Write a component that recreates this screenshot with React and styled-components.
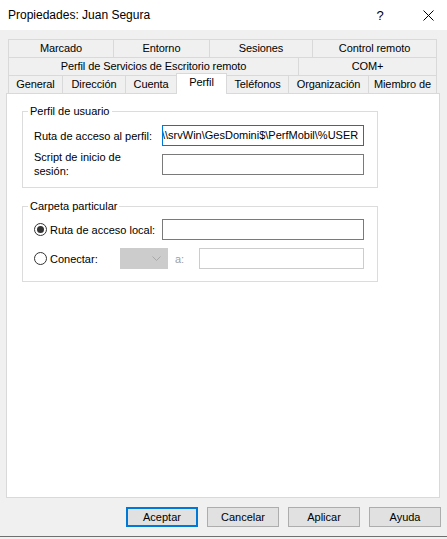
import React from 'react'
import styled, { createGlobalStyle } from 'styled-components'

const GlobalStyle = createGlobalStyle`
  body {
    margin: 0;
    background: #f0f0f0;
    font-family: "Liberation Sans", Arial, sans-serif;
    font-size: 11px;
    color: #000;
  }
`

const Window = styled.div`
  width: 447px;
  height: 539px;
  display: flex;
  flex-direction: column;
  background: #f0f0f0;
  overflow: hidden;
`

const TitleBar = styled.div`
  height: 30px;
  background: #fff;
  display: flex;
  align-items: center;
  padding-left: 8px;
  font-size: 12px;
  flex-shrink: 0;
`

const Title = styled.div`
  flex: 1;
`

const HelpGlyph = styled.span`
  width: 46px;
  text-align: center;
  font-size: 13px;
  margin-right: 6px;
`

const CloseBox = styled.span`
  width: 38px;
  display: flex;
  justify-content: center;
  align-items: center;
`

const TabStrip = styled.div`
  margin: 9px 10px 0 8px;
  display: flex;
  flex-direction: column;
`

const TabRow = styled.div`
  display: flex;
  height: 18px;
`

const Tab = styled.div`
  flex: 0 0 ${p => p.$w}px;
  box-sizing: border-box;
  border-top: 1px solid #d9d9d9;
  border-left: 1px solid #d9d9d9;
  text-align: center;
  line-height: 17px;
  white-space: nowrap;
  letter-spacing: -0.1px;
  &:last-child {
    border-right: 1px solid #d9d9d9;
  }
`

const ActiveTab = styled(Tab)`
  align-self: flex-start;
  height: 21px;
  margin-top: -2px;
  background: #fff;
  border-right: 1px solid #d9d9d9;
  line-height: 16px;
  position: relative;
  z-index: 1;
  & + div {
    border-left: none;
  }
`

const Panel = styled.div`
  margin: 0 7px 0 6px;
  height: 405px;
  box-sizing: border-box;
  background: #fff;
  border: 1px solid #d9d9d9;
  padding: 10px 0 0 15px;
  flex-shrink: 0;
`

const Group = styled.fieldset`
  margin: ${p => p.$top || 0}px 0 0 0;
  width: 356px;
  box-sizing: border-box;
  border: 1px solid #dcdcdc;
  padding: ${p => p.$pad};
`

const Legend = styled.legend`
  padding: 0 2px;
  margin-left: -6px;
  line-height: 14px;
`

const FieldGrid = styled.div`
  display: grid;
  grid-template-columns: 128px 202px;
  row-gap: 4px;
  align-items: center;
`

const Label = styled.div`
  line-height: 14px;
`

const Field = styled.div`
  box-sizing: border-box;
  width: ${p => p.$w || 202}px;
  height: 21px;
  background: #fff;
  border: 1px solid ${p => (p.$focus ? '#0078d7' : p.$off ? '#cccccc' : '#7a7a7a')};
  overflow: hidden;
  white-space: nowrap;
  line-height: 19px;
  text-indent: -1px;
  font-size: 11px;
`

const RadioRow = styled.div`
  display: flex;
  align-items: center;
  height: 21px;
  margin-top: ${p => p.$gap || 0}px;
`

const RadioLabel = styled.label`
  display: flex;
  align-items: center;
  width: ${p => p.$w}px;
  flex-shrink: 0;
`

const Radio = styled.span`
  width: 13px;
  height: 13px;
  box-sizing: border-box;
  border: 1px solid #333;
  border-radius: 50%;
  background: #fff;
  margin-right: 3px;
  display: flex;
  align-items: center;
  justify-content: center;
  &::after {
    content: '';
    width: 7px;
    height: 7px;
    border-radius: 50%;
    background: ${p => (p.$checked ? '#333' : 'transparent')};
  }
`

const Combo = styled.div`
  width: 48px;
  height: 21px;
  box-sizing: border-box;
  background: #cccccc;
  border: 1px solid #cccccc;
  display: flex;
  align-items: center;
  justify-content: flex-end;
  padding-right: 6px;
`

const ToLabel = styled.span`
  width: 24px;
  margin-left: 7px;
  color: #a0a0a0;
`

const ButtonBar = styled.div`
  display: flex;
  justify-content: flex-end;
  gap: 9px;
  padding: 9px 6px 0 0;
`

const Button = styled.button`
  width: 72px;
  height: 20px;
  box-sizing: border-box;
  background: #e1e1e1;
  border: ${p => (p.$primary ? '2px solid #0078d7' : '1px solid #adadad')};
  font-family: inherit;
  font-size: 11px;
  color: #000;
  padding: 0;
`

const BottomLine = styled.div`
  margin-top: auto;
  margin-bottom: 2px;
  height: 1px;
  background: #6f6f6f;
`

const topTabs = [
  [
    ['Marcado', 105],
    ['Entorno', 96],
    ['Sesiones', 103],
    ['Control remoto', 125],
  ],
  [
    ['Perfil de Servicios de Escritorio remoto', 290],
    ['COM+', 139],
  ],
]

const frontTabs = [
  ['General', 54],
  ['Dirección', 63],
  ['Cuenta', 51],
  ['Perfil', 51, true],
  ['Teléfonos', 61],
  ['Organización', 80],
  ['Miembro de', 69],
]

const App = () => {
  return (
    <Window>
      <GlobalStyle />
      <TitleBar>
        <Title>Propiedades: Juan Segura</Title>
        <HelpGlyph>?</HelpGlyph>
        <CloseBox>
          <svg width="11" height="11" viewBox="0 0 11 11">
            <path d="M0.5 0.5 L10.5 10.5 M10.5 0.5 L0.5 10.5" stroke="#000" strokeWidth="1" />
          </svg>
        </CloseBox>
      </TitleBar>

      <TabStrip>
        {topTabs.map((row, i) => (
          <TabRow key={i}>
            {row.map(([name, w]) => (
              <Tab key={name} $w={w}>{name}</Tab>
            ))}
          </TabRow>
        ))}
        <TabRow>
          {frontTabs.map(([name, w, active]) =>
            active ? (
              <ActiveTab key={name} $w={w}>{name}</ActiveTab>
            ) : (
              <Tab key={name} $w={w}>{name}</Tab>
            )
          )}
        </TabRow>
      </TabStrip>

      <Panel>
        {/* perfil de usuario */}
        <Group $pad="7px 0 9px 11px">
          <Legend>Perfil de usuario</Legend>
          <FieldGrid>
            <Label>Ruta de acceso al perfil:</Label>
            <Field $focus>\\srvWin\GesDomini$\PerfMobil\%USER</Field>
            <Label>
              Script de inicio de
              <br />
              sesión:
            </Label>
            <Field />
          </FieldGrid>
        </Group>

        {/* carpeta particular */}
        <Group $top={11} $pad="6px 0 12px 11px">
          <Legend>Carpeta particular</Legend>
          <RadioRow>
            <RadioLabel $w={128}>
              <Radio $checked />
              Ruta de acceso local:
            </RadioLabel>
            <Field />
          </RadioRow>
          <RadioRow $gap={8}>
            <RadioLabel $w={86}>
              <Radio />
              Conectar:
            </RadioLabel>
            <Combo>
              <svg width="9" height="6" viewBox="0 0 9 6">
                <path d="M0.5 0.5 L4.5 4.5 L8.5 0.5" fill="none" stroke="#a8a8a8" strokeWidth="1" />
              </svg>
            </Combo>
            <ToLabel>a:</ToLabel>
            <Field $off $w={165} />
          </RadioRow>
        </Group>
      </Panel>

      <ButtonBar>
        <Button $primary>Aceptar</Button>
        <Button>Cancelar</Button>
        <Button>Aplicar</Button>
        <Button>Ayuda</Button>
      </ButtonBar>
      <BottomLine />
    </Window>
  )
}

export default App
